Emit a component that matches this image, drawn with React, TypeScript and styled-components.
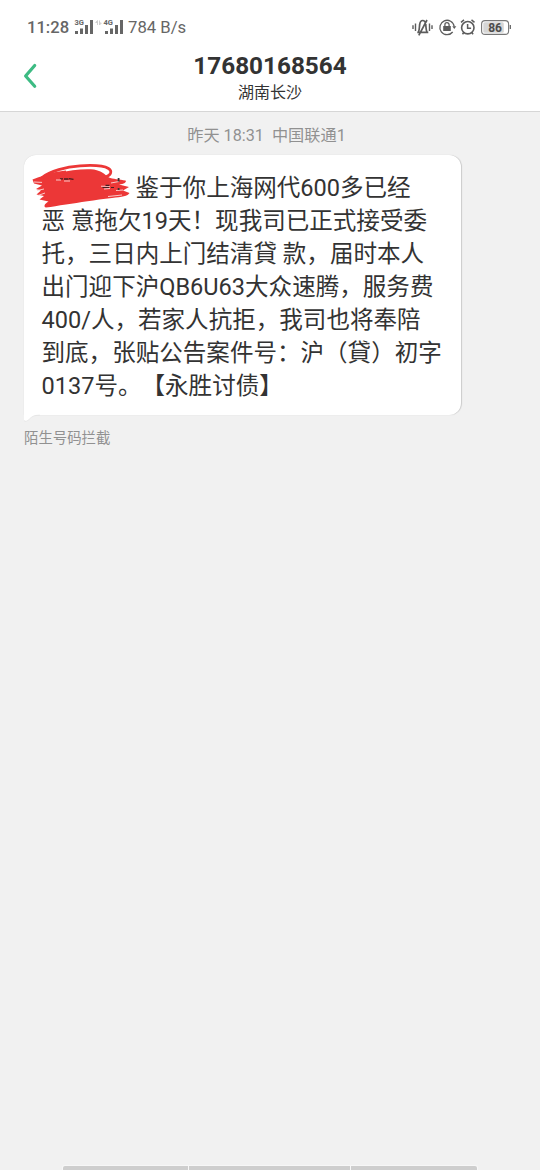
import React from 'react';
import styled, { createGlobalStyle } from 'styled-components';

const GlobalStyle = createGlobalStyle`
  body {
    margin: 0;
    background: #f1f1f1;
    font-family: Roboto, "Noto Sans CJK SC", sans-serif;
    text-spacing-trim: space-all;
  }
`;

const Screen = styled.div`
  width: 540px;
  height: 1170px;
  display: flex;
  flex-direction: column;
  background: #f1f1f1;
  overflow: hidden;
`;

const Header = styled.header`
  height: 111px;
  box-sizing: content-box;
  background: #fff;
  border-bottom: 1px solid #d6d6d6;
  flex: none;
`;

const StatusBar = styled.div`
  height: 54px;
  padding: 0 28px 0 27px;
  display: flex;
  justify-content: space-between;
  align-items: center;
  color: #666;
`;

const StatusGroup = styled.div`
  display: flex;
  align-items: center;
`;

const Clock = styled.span`
  width: 47px;
  padding-top: 2px;
  font-size: 16.6px;
  line-height: 20px;
  font-weight: 500;
`;

const NetSpeed = styled.span`
  margin-left: 4px;
  padding-top: 1px;
  font-size: 16.7px;
  line-height: 20px;
`;

const TitleBar = styled.div`
  height: 57px;
  display: grid;
  grid-template-columns: 60px 1fr 60px;
`;

const BackButton = styled.button`
  border: 0;
  background: none;
  padding: 9px 0 0 23px;
  display: flex;
  align-items: flex-start;
`;

const Contact = styled.div`
  display: flex;
  flex-direction: column;
  align-items: center;
  color: #333;
`;

const Phone = styled.div`
  font-size: 24.3px;
  line-height: 23px;
  font-weight: 700;
`;

const Region = styled.div`
  font-size: 16px;
  line-height: 24px;
  margin-top: 4px;
`;

const Thread = styled.main`
  flex: 1;
  display: flex;
  flex-direction: column;
  align-items: flex-start;
  padding-left: 24px;
`;

const Timestamp = styled.div`
  width: 485px;
  margin: 12px 0 0;
  text-align: center;
  white-space: pre;
  font-size: 16.2px;
  line-height: 24px;
  color: #919191;
`;

const Bubble = styled.article`
  position: relative;
  box-sizing: border-box;
  width: 437px;
  height: 260px;
  margin-top: 7px;
  padding: 17px 0 0 17.5px;
  background: #fff;
  border-radius: 12px 12px 12px 0;
  box-shadow: 0.5px 0 1px rgba(0, 0, 0, 0.16);
`;

const Tail = styled.svg`
  position: absolute;
  left: 0;
  top: 259px;
`;

const Line = styled.p`
  margin: 0;
  height: 33px;
  font-size: 23.55px;
  line-height: 33px;
  color: #333;
  white-space: pre;
`;

const Redacted = styled.span`
  display: inline-block;
  width: 94px;
`;

const Scribble = styled.svg`
  position: absolute;
  left: 6px;
  top: 5px;
`;

const Note = styled.div`
  margin-top: 13px;
  font-size: 14.4px;
  line-height: 22px;
  color: #919191;
`;

const NavHints = styled.footer`
  display: flex;
  height: 4px;
  margin-left: 63px;
  gap: 1px;
`;

const Hint = styled.span<{ $w: number; $edge?: 'left' | 'right' }>`
  width: ${(p) => p.$w}px;
  background: #cecece;
  box-shadow: 0 0 0 1px #f7f7f7;
  border-radius: ${(p) => (p.$edge === 'left' ? '2px 0 0 0' : p.$edge === 'right' ? '0 2px 0 0' : '0')};
`;

const BatteryText = styled.text`
  font: 700 12px Roboto, sans-serif;
  fill: #4c4c4c;
`;

const NetLabel = styled.text`
  font: 700 7.5px Roboto, sans-serif;
  fill: #666;
`;

const Signals = () => (
  <svg width="50" height="18" viewBox="74 18 50 18">
    <NetLabel x="74.5" y="25.2">3G</NetLabel>
    <g fill="#666">
      <path d="M75 31h3v3h-3zM80 28.500h3v5.500h-3zM85 25h3v9h-3zM90 20h3v14h-3z" />
      <path d="M105 31h3v3h-3zM110 28.500h3v5.500h-3zM115 25h3v9h-3zM120 20h3v14h-3z" />
    </g>
    <path d="M97.500 25v-4.500l-1.800 2h1.800M99.500 20.500v4.500l1.800-2h-1.800" fill="none" stroke="#ccc" strokeWidth="0.9" />
    <NetLabel x="103.500" y="25.2">4G</NetLabel>
  </svg>
);

const StatusIcons = () => (
  <svg width="100" height="22" viewBox="412 16 100 22" fill="none" stroke="#5c5c5c">
    <path d="M413 25.200v3.800M415.500 23.500v7.500M432 25.200v3.800M429.500 23.500v7.500" strokeWidth="1.400" />
    <path d="M417.300 32.300h11M418.500 32c1-2.500.8-5 1.200-7.500.3-2.700 1.600-4 3-4s2.700 1.300 3 4c.4 2.500.2 5 1.200 7.500M418.800 35.300L427 20" strokeWidth="1.700" />
    <path d="M452.700 32A7.200 7.200 0 1 1 454.200 26.500" strokeWidth="1.300" />
    <path d="M452.300 26.300h4l-2 2.700z" fill="#5c5c5c" stroke="none" />
    <rect x="443.200" y="26" width="7.600" height="5" fill="#5c5c5c" stroke="none" />
    <path d="M444.900 26.500v-1.700a2.100 2.100 0 0 1 4.200 0v1.700" strokeWidth="1.300" />
    <circle cx="467.800" cy="27.700" r="6.200" strokeWidth="1.600" />
    <path d="M467.600 24v4.300h3.500M461 22.300l3-2.400M474.500 22.300l-3-2.400M463.800 32.500l-1.300 1.800M471.800 32.500l1.300 1.800" strokeWidth="1.500" />
    <rect x="481.600" y="20.600" width="27" height="13.800" rx="3.500" stroke="#777" strokeWidth="1.100" />
    <rect x="483.300" y="22.200" width="20.500" height="10.600" rx="1.500" fill="#d6d6d6" stroke="none" />
    <path d="M510.300 25v4" strokeWidth="1.200" />
    <BatteryText x="488.200" y="31.800" stroke="none">86</BatteryText>
  </svg>
);

const lines = [
  '恶 意拖欠19天！现我司已正式接受委',
  '托，三日内上门结清貸 款，届时本人',
  '出门迎下沪QB6U63大众速腾，服务费',
  '400/人，若家人抗拒，我司也将奉陪',
  '到底，张贴公告案件号：沪（貸）初字',
  '0137号。【永胜讨债】',
];

export default function App() {
  return (
    <Screen>
      <GlobalStyle />
      <Header>
        <StatusBar>
          <StatusGroup>
            <Clock>11:28</Clock>
            <Signals />
            <NetSpeed>784 B/s</NetSpeed>
          </StatusGroup>
          <StatusIcons />
        </StatusBar>
        <TitleBar>
          <BackButton aria-label="返回">
            <svg width="14" height="26" viewBox="23 63 14 26" fill="none">
              <path d="M34.700 65.500L25.600 76L34.700 86.300" stroke="#3dbb83" strokeWidth="3.200" strokeLinecap="round" strokeLinejoin="round" />
            </svg>
          </BackButton>
          <Contact>
            <Phone>17680168564</Phone>
            <Region>湖南长沙</Region>
          </Contact>
        </TitleBar>
      </Header>
      <Thread>
        <Timestamp>昨天 18:31  中国联通1</Timestamp>
        <Bubble>
          <Line>
            <Redacted />
            鉴于你上海网代600多已经
          </Line>
          {lines.map((line) => (
            <Line key={line}>{line}</Line>
          ))}
          <Tail width="18" height="9" viewBox="0 0 18 9">
            <path d="M0 0H18C10 .5 8 2.500 5.500 5C3.500 7 1.500 8 0 6z" fill="#fff" />
            <path d="M16 1.200C10 1.200 8 2.500 5.500 5C3.500 7 1.500 8 0 6.500" fill="none" stroke="#e2e2e2" strokeWidth="0.700" />
          </Tail>
          <Scribble width="102" height="50" viewBox="30 160 102 50">
            <path
              d="M32.500 179.500C40 176 50 174 58 173C70 170 84 168.500 94 169.500C102 171 104 174 109 177.500C112 179 120 179.500 125.500 180.500C127 182 124 184 119 184.500L129 187L123 190.500L129.500 193C128 196 122 197 112 198C94 200 80 202.500 66 204.500C58 205.500 52 207 46 207.500C43.500 207 44 204 48.500 201.500L39.500 199.500L44 196L36.500 194.500L41 190.500L36 189L42 185.500L34 183.500z"
              fill="#ec3737"
            />
            <path d="M42 177.500C50 171 66 166.800 80 165.800C92 165 104 165.800 108.500 168.500C112.500 171 111 175 106.500 176.500" fill="none" stroke="#ec3737" strokeWidth="2.700" strokeLinecap="round" />
            <path d="M42.500 177.500C48 173 56 171.500 66 170.500L66 174L46 179z" fill="#ec3737" />
            <path d="M34 182l8 .4M37 190.500l7-1.500M38 195.500l7-2.500M111 183l8-1.500M116 190.500l7-.5M108 196.500l14-1.500" stroke="#fbdada" strokeWidth="0.900" fill="none" />
            <path d="M60 178.800h3M64 179h4.500M69 178.600l4.500.7" stroke="#442021" strokeWidth="1.300" fill="none" />
            <path d="M56 180h5M64 181h6M101 186.200h9M104 189l6-.5" stroke="#f9caca" strokeWidth="1.100" />
            <path d="M102.500 187.500h6.500M105.500 185.300h4M111 187.500h3" stroke="#442021" strokeWidth="1.200" />
            <path d="M118.600 178v3.500M118.600 188v2" stroke="#333" strokeWidth="1.800" />
          </Scribble>
        </Bubble>
        <Note>陌生号码拦截</Note>
      </Thread>
      <NavHints>
        <Hint $w={125} $edge="left" />
        <Hint $w={161} />
        <Hint $w={126} $edge="right" />
      </NavHints>
    </Screen>
  );
}
